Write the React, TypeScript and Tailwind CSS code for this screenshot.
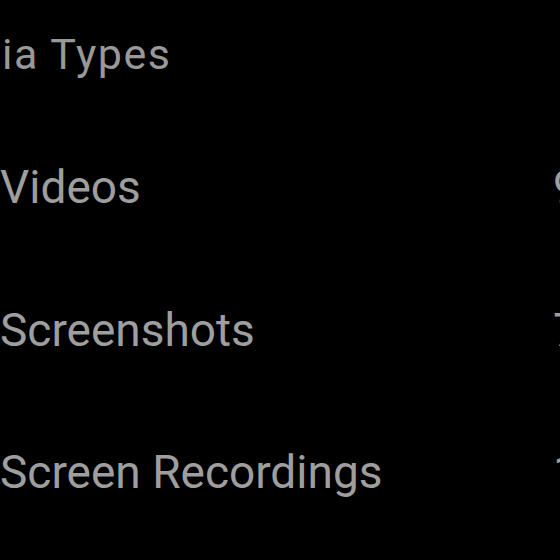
const rows = [
  { label: "Videos", count: "9" },
  { label: "Screenshots", count: "7" },
  { label: "Screen Recordings", count: "1" },
];

export default function App() {
  return (
    <div className="w-[560px] h-[560px] overflow-hidden bg-black text-[#9e9e9e] font-['Roboto',sans-serif]">
      <div className="pt-[33px]">
        <h2 className="-ml-[87px] text-[43px] leading-none tracking-[1.5px] font-normal whitespace-nowrap text-[#999999]">
          Media Types
        </h2>
        <div className="mt-[40px] flex flex-col w-[620px]">
          {rows.map((row) => (
            <div key={row.label} className="h-[142.5px] grid grid-cols-[553px_1fr] items-center">
              <span className="text-[46px] leading-none whitespace-nowrap">{row.label}</span>
              <span className="text-[46px] leading-none">{row.count}</span>
            </div>
          ))}
        </div>
      </div>
    </div>
  );
}
